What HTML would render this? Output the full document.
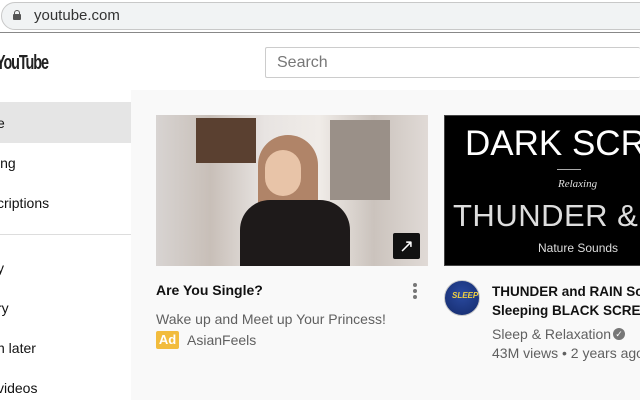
<!DOCTYPE html>
<html><head><style>
*{margin:0;padding:0;box-sizing:border-box}
html,body{width:640px;height:400px;overflow:hidden}
body{background:#fff;font-family:"Liberation Sans",sans-serif;position:relative}
#w{position:absolute;left:0;top:0;width:640px;height:400px;overflow:hidden}
.a{position:absolute}
</style></head><body><div id="w">
<div class="a" style="left:0;top:0;width:640px;height:33px;background:#fff;border-bottom:1px solid #888"></div>
<div class="a" style="left:1px;top:2px;width:660px;height:28px;background:#f1f3f4;border:1px solid #c8c8c8;border-radius:14px"></div>
<div class="a" style="left:13px;top:14px;width:8px;height:6px;background:#555;border-radius:1px"></div>
<div class="a" style="left:14px;top:10px;width:6px;height:6px;border:1.5px solid #555;border-bottom:none;border-radius:3px 3px 0 0"></div>
<div class="a" style="left:34px;top:7px;font-size:15px;color:#333">youtube.com</div>
<div class="a" style="left:-4px;top:52px;font-size:20px;font-weight:bold;color:#222;letter-spacing:-1.5px;transform:scaleX(.72);transform-origin:left">YouTube</div>
<div class="a" style="left:265px;top:47px;width:375px;height:31px;border:1px solid #ccc;border-right:none;border-radius:2px;background:#fff"></div>
<div class="a" style="left:277px;top:54px;font-size:16px;color:#777">Search</div>
<div class="a" style="left:131px;top:90px;width:509px;height:310px;background:#f9f9f9"></div>
<div class="a" style="left:0;top:102px;width:131px;height:41px;background:#e5e5e5"></div>
<div class="a" style="left:0;top:234px;width:131px;height:1px;background:#ddd"></div>
<div class="a" style="left:-3px;top:115px;font-size:14px;color:#111">e</div>
<div class="a" style="left:-3px;top:155px;font-size:14px;color:#111">ing</div>
<div class="a" style="left:-3px;top:195px;font-size:14px;color:#111">criptions</div>
<div class="a" style="left:-3px;top:260px;font-size:14px;color:#111">y</div>
<div class="a" style="left:-3px;top:300px;font-size:14px;color:#111">ry</div>
<div class="a" style="left:-3px;top:340px;font-size:14px;color:#111">n later</div>
<div class="a" style="left:-3px;top:380px;font-size:14px;color:#111">videos</div>
<div class="a" style="left:156px;top:115px;width:272px;height:151px;overflow:hidden;background:linear-gradient(90deg,#d8d4d2 0%,#c8bfb8 20%,#e8e4e2 40%,#f0ece8 60%,#cbc3bd 80%,#e0dad6 100%)">
<div class="a" style="left:40px;top:3px;width:60px;height:45px;background:#5a4030"></div>
<div class="a" style="left:102px;top:20px;width:60px;height:95px;background:#b08468;border-radius:30px 30px 10px 10px"></div>
<div class="a" style="left:84px;top:85px;width:110px;height:66px;background:#1e1a1a;border-radius:30px 30px 0 0"></div>
<div class="a" style="left:109px;top:35px;width:36px;height:46px;background:#e8c4a8;border-radius:18px"></div>
<div class="a" style="left:174px;top:5px;width:60px;height:80px;background:#9a9088"></div>
<div class="a" style="left:237px;top:118px;width:27px;height:26px;background:#111;border-radius:2px;color:#fff;font-size:18px;text-align:center;line-height:26px">↗</div>
</div>
<div class="a" style="left:156px;top:282px;font-size:14px;font-weight:bold;color:#111">Are You Single?</div>
<div class="a" style="left:413px;top:283px;width:4px;height:4px;border-radius:2px;background:#777;box-shadow:0 6px #777,0 12px #777"></div>
<div class="a" style="left:156px;top:311px;font-size:14px;color:#606060">Wake up and Meet up Your Princess!</div>
<div class="a" style="left:156px;top:331px;width:23px;height:18px;background:#f2bc3d;border-radius:2px;color:#fff;font-size:13px;font-weight:bold;text-align:center;line-height:18px">Ad</div>
<div class="a" style="left:187px;top:332px;font-size:14px;color:#606060">AsianFeels</div>
<div class="a" style="left:444px;top:115px;width:196px;height:151px;background:#000;border:1px solid #444;border-right:none;overflow:hidden">
<div class="a" style="left:20px;top:8px;font-size:35px;color:#fff;white-space:nowrap">DARK SCREEN</div>
<div class="a" style="left:112px;top:53px;width:24px;height:1px;background:#aaa"></div>
<div class="a" style="left:113px;top:62px;font-size:11px;font-style:italic;color:#ddd;font-family:'Liberation Serif',serif">Relaxing</div>
<div class="a" style="left:8px;top:82px;font-size:31px;color:#ddd;white-space:nowrap;letter-spacing:0.5px">THUNDER &amp; R</div>
<div class="a" style="left:93px;top:125px;font-size:12px;color:#ddd">Nature Sounds</div>
</div>
<div class="a" style="left:444px;top:280px;width:36px;height:36px;border-radius:18px;background:radial-gradient(circle at 50% 40%,#2a4aa0,#142a6a);border:1px solid #ccc"></div>
<div class="a" style="left:452px;top:291px;font-size:8px;font-weight:bold;color:#f0d040;font-style:italic">SLEEP</div>
<div class="a" style="left:492px;top:282px;width:148px;overflow:hidden;font-size:13.5px;font-weight:bold;color:#111;line-height:19px;white-space:nowrap">THUNDER and RAIN Sounds<br>Sleeping BLACK SCREEN</div>
<div class="a" style="left:492px;top:326px;font-size:14px;color:#606060">Sleep &amp; Relaxation</div>
<div class="a" style="left:613px;top:328px;width:12px;height:12px;border-radius:6px;background:#777;color:#fff;font-size:9px;text-align:center;line-height:12px">✓</div>
<div class="a" style="left:492px;top:345px;width:148px;overflow:hidden;font-size:14px;color:#606060;white-space:nowrap">43M views • 2 years ago</div>
</div></body></html>
